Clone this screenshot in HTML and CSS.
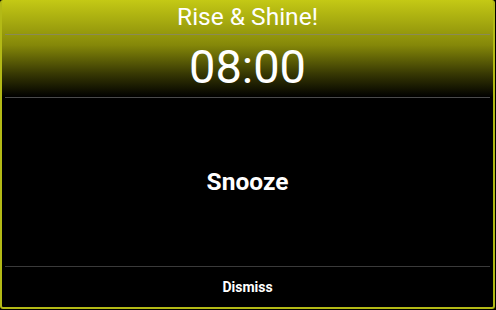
FILE: index.html
```html
<!DOCTYPE html>
<html>
<head>
<meta charset="utf-8">
<link rel="stylesheet" href="styles.css">
</head>
<body>
<div class="frame">
  <div class="title">Rise &amp; Shine!</div>
  <div class="rule rule-top"></div>
  <div class="clock">08:00</div>
  <div class="rule rule-mid"></div>
  <div class="snooze">Snooze</div>
  <div class="rule rule-low"></div>
  <div class="dismiss">Dismiss</div>
</div>
</body>
</html>
```
FILE: styles.css
```css
html, body {
  margin: 0;
  padding: 0;
  background: #000;
}
body {
  width: 496px;
  height: 310px;
  overflow: hidden;
  font-family: Roboto, "Liberation Sans", sans-serif;
  color: #fff;
}
.frame {
  box-sizing: border-box;
  width: 495px;
  height: 309px;
  border: 2px solid #b3b916;
  border-top: none;
  border-radius: 3px;
  background: linear-gradient(#c4c915 0px, #858809 45px, #343503 75px, #000 97px);
  display: flex;
  flex-direction: column;
}
.title {
  height: 34px;
  display: flex;
  align-items: center;
  justify-content: center;
  font-size: 24.5px;
  line-height: 1;
  padding-top: 1px;
  box-sizing: border-box;
}
.rule {
  height: 1px;
  margin: 0 3px;
  flex: none;
}
.rule-top { background: #8a8a55; }
.rule-mid { background: #4a4a4a; }
.rule-low { background: #3a3a3a; }
.clock {
  height: 62px;
  display: flex;
  align-items: center;
  justify-content: center;
  font-size: 47px;
  font-weight: 400;
  line-height: 1;
}
.snooze {
  flex: 1;
  display: flex;
  align-items: center;
  justify-content: center;
  font-size: 24.5px;
  font-weight: 700;
  padding-bottom: 2px;
}
.dismiss {
  height: 40px;
  display: flex;
  align-items: center;
  justify-content: center;
  font-size: 14px;
  font-weight: 700;
}
```
